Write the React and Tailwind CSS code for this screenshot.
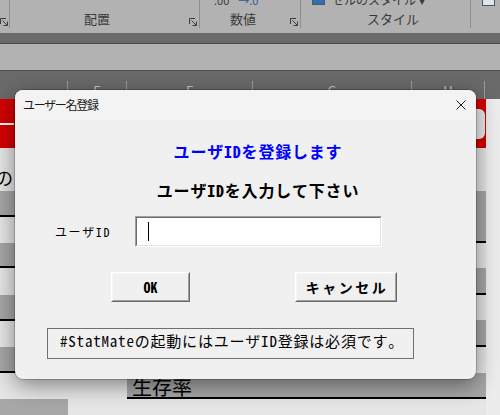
import React from "react";

const MONO = "font-['Noto_Sans_Mono_CJK_JP','Noto_Sans_CJK_JP',monospace]";

const Launcher = () => (
  <svg width="8" height="8" viewBox="0 0 8 8" fill="none" stroke="#3d3d3d" strokeWidth="1">
    <path d="M0.5 6V0.5H6" />
    <path d="M2.5 2.5L7 7" />
    <path d="M3.5 7.5H7.5V3.5" />
  </svg>
);

const Gray = ({ h, line, children }) => (
  <div className={`${h} bg-[#a7a7a7] ${line ? "border-b-2 border-black" : ""}`}>{children}</div>
);
const Light = ({ h }) => <div className={`${h} bg-[#e6e6e6]`} />;

export default function App() {
  return (
    <div className="w-[500px] h-[415px] relative overflow-hidden bg-[#e9e9e9] font-['Noto_Sans_CJK_JP',sans-serif] text-black">
      {/* ribbon */}
      <div className="h-[33px] bg-[#b2b2b2] flex items-start text-[13px] text-[#3a3a3a]">
        <div className="w-[10px] h-[28px] border-r border-[#8e8e8e] flex items-end pb-[2px]">
          <Launcher />
        </div>
        <div className="w-[190px] h-[28px] border-r border-[#8e8e8e] flex items-end justify-between pb-[2px] pr-[2px]">
          <span className="ml-[74px] leading-[14px]">配置</span>
          <Launcher />
        </div>
        <div className="w-[101px] h-[28px] border-r border-[#8e8e8e] flex flex-col justify-between pb-[2px] pr-[2px]">
          <div className="-mt-[7px] ml-[14px] flex gap-[9px] text-[11px] leading-[14px]">
            <span>.00</span>
            <span className="text-[#2b5797]">→.0</span>
          </div>
          <div className="flex items-end justify-between">
            <span className="ml-[30px] leading-[14px]">数値</span>
            <Launcher />
          </div>
        </div>
        <div className="w-[170px] h-[28px] border-r border-[#8e8e8e] flex flex-col justify-between pb-[2px]">
          <div className="-mt-[8px] ml-[11px] flex items-center gap-[7px] text-[12px] leading-[16px]">
            <div className="w-[13px] h-[10px] border border-[#555] bg-[#2f6fb5]" />
            <span>セルのスタイル ▾</span>
          </div>
          <span className="ml-[66px] leading-[14px]">スタイル</span>
        </div>
        <div className="flex-1 h-[28px] pl-[11px]">
          <div className="-mt-[4px] w-[13px] h-[10px] border border-[#555] bg-[#dfe6ee]" />
        </div>
      </div>
      <div className="h-[11px] bg-[#6a6a6a] border-b border-[#4a4a4a]" />
      <div className="h-[27px] bg-[#b2b2b2] border-b border-[#4e4e4e]" />

      {/* column header */}
      <div className="h-[28px] bg-[#6a6a6a] flex text-[13px] leading-[18px] text-[#c6c6c6]">
        {[
          ["w-[68px]", ""],
          ["w-[59px]", "E"],
          ["w-[126px]", "F"],
          ["w-[159px]", "G"],
          ["w-[73px]", "H"],
        ].map(([w, l], i) => (
          <div key={i} className={`${w} h-full flex`}>
            <div className="flex-1 text-center pt-[11px]">{l}</div>
            <div className="w-[1px] mt-[10px] bg-[#9c9c9c]" />
          </div>
        ))}
        <div className="flex-1" />
      </div>

      {/* sheet */}
      <div className="flex h-[316px]">
        <div className="w-[68px] flex flex-col">
          <div className="h-[49px] bg-[#d50000] overflow-hidden">
            <span className="block -ml-[6px] pt-[10px] text-[22px] leading-[26px] text-white">ー</span>
          </div>
          <div className="h-[43px] bg-[#e6e6e6] overflow-hidden">
            <span className="block -ml-[5px] pt-[18px] text-[18px] leading-[22px]">の</span>
          </div>
          <Gray h="h-[26px]" line />
          <Light h="h-[26px]" />
          <Gray h="h-[25px]" line />
          <Light h="h-[27px]" />
          <Gray h="h-[26px]" line />
          <Light h="h-[26px]" />
          <Gray h="h-[26px]" line />
          <Light h="h-[26px]" />
          <div className="flex-1 bg-[#a7a7a7]" />
        </div>
        <div className="w-[59px] flex flex-col">
          <div className="h-[49px] bg-[#d50000]" />
          <div className="flex-1 bg-[#e6e6e6]" />
        </div>
        <div className="w-[359px] flex flex-col">
          <div className="h-[49px] bg-[#d50000] flex items-center justify-end pr-[1px]">
            <div className="w-[40px] h-[30px] rounded-[6px] bg-[#ebebeb]" />
          </div>
          <Light h="h-[43px]" />
          <Gray h="h-[52px]" line />
          <Light h="h-[25px]" />
          <Gray h="h-[27px]" line />
          <Light h="h-[25px]" />
          <Gray h="h-[27px]" line />
          <Light h="h-[26px]" />
          <Gray h="h-[26px]" line>
            <span className="block pl-[5px] pt-[3px] text-[20px] leading-[22px]">生存率</span>
          </Gray>
          <div className="flex-1 bg-[#e6e6e6]" />
        </div>
        <div className="flex-1 bg-[#ececec]" />
      </div>

      {/* dialog */}
      <div className="absolute left-[15px] top-[90px] w-[461px] h-[289px] rounded-[8px] overflow-hidden bg-[#f0f0f0] ring-1 ring-black/20 shadow-[0_6px_22px_rgba(0,0,0,0.45)] flex flex-col">
        <div className="h-[30px] bg-[#f3f3f3] flex items-center justify-between pl-[8px] pr-[10px]">
          <span className="text-[12px] leading-[16px] tracking-[-1.3px] text-[#1a1a1a]">ユーザー名登録</span>
          <svg width="10" height="10" viewBox="0 0 10 10" fill="none" stroke="#1a1a1a" strokeWidth="1">
            <path d="M0.5 0.5L9.5 9.5M9.5 0.5L0.5 9.5" />
          </svg>
        </div>
        <div className={`flex-1 flex flex-col ${MONO}`}>
          <div className="pt-[21px] pl-[25px] text-center text-[16px] leading-[20px] font-bold tracking-[0.8px] text-[#0000ff]">
            ユーザIDを登録します
          </div>
          <div className="mt-[19px] pl-[25px] text-center text-[16px] leading-[20px] font-bold tracking-[0.8px]">
            ユーザIDを入力して下さい
          </div>
          <div className="mt-[16px] flex items-center pl-[40px]">
            <span className="w-[80px] text-[12px] leading-[16px] tracking-[1.6px]">ユーザID</span>
            <div className="w-[247px] h-[31px] border border-t-[#a0a0a0] border-l-[#a0a0a0] border-b-white border-r-white">
              <div className="h-full border border-t-[#6d6d6d] border-l-[#6d6d6d] border-b-[#e3e3e3] border-r-[#e3e3e3] bg-white flex items-center">
                <div className="ml-[11px] w-[1px] h-[19px] bg-black" />
              </div>
            </div>
          </div>
          <div className="mt-[25px] flex pl-[96px] gap-[105px]">
            <button className="w-[79px] h-[30px] border border-t-white border-l-white border-b-[#696969] border-r-[#696969]">
              <div className="h-full border border-t-[#f7f7f7] border-l-[#f7f7f7] border-b-[#a0a0a0] border-r-[#a0a0a0] flex items-center justify-center text-[14px] font-bold">
                OK
              </div>
            </button>
            <button className="w-[102px] h-[30px] border border-t-white border-l-white border-b-[#696969] border-r-[#696969]">
              <div className="h-full border border-t-[#f7f7f7] border-l-[#f7f7f7] border-b-[#a0a0a0] border-r-[#a0a0a0] flex items-center justify-center text-[14px] font-bold tracking-[2.5px] pl-[2px]">
                キャンセル
              </div>
            </button>
          </div>
          <div className="mt-[26px] ml-[32px] w-[367px] h-[31px] border border-[#707070] pl-[12px] pt-[2px] text-[15px] leading-[20px] tracking-[0.8px] whitespace-nowrap">
            #StatMateの起動にはユーザID登録は必須です。
          </div>
        </div>
      </div>
    </div>
  );
}
